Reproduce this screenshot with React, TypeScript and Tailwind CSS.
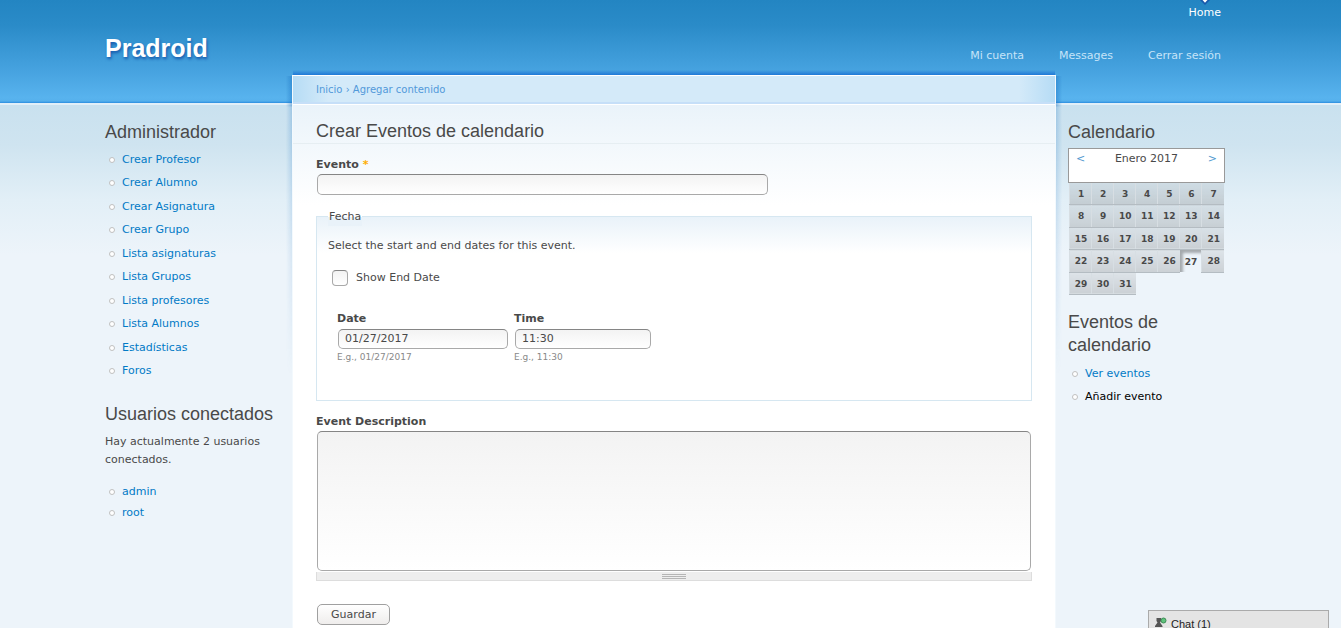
import React from "react";

const adminLinks = [
  "Crear Profesor",
  "Crear Alumno",
  "Crear Asignatura",
  "Crear Grupo",
  "Lista asignaturas",
  "Lista Grupos",
  "Lista profesores",
  "Lista Alumnos",
  "Estadísticas",
  "Foros",
];

const weeks = [
  [1, 2, 3, 4, 5, 6, 7],
  [8, 9, 10, 11, 12, 13, 14],
  [15, 16, 17, 18, 19, 20, 21],
  [22, 23, 24, 25, 26, 27, 28],
  [29, 30, 31],
];

const field =
  "block rounded-[5px] border border-[#a9a9a9] border-t-[#858585] bg-linear-to-b from-[#f3f3f3] to-white px-[6px] pb-[2px] text-[11px] text-[#494949] outline-none";

function Heading({ children }: { children: React.ReactNode }) {
  return (
    <h2 className="font-['Liberation_Sans',sans-serif] text-[18px] leading-[23px] text-[#494949]">
      {children}
    </h2>
  );
}

function Item({ label, dark }: { label: string; dark?: boolean }) {
  return (
    <li className="flex items-center gap-[7px] pl-1">
      <span className="size-[6px] rounded-full border border-[#c0c0c0] bg-white" />
      <a href="#" className={dark ? "text-black" : "text-[#027ac6]"}>
        {label}
      </a>
    </li>
  );
}

function Calendar() {
  return (
    <div className="w-[157px]">
      <div className="flex h-[35px] justify-between border border-[#999] bg-white px-[7px] text-[11px] leading-[19px]">
        <a href="#" aria-label="Mes anterior" className="text-[#5299cf]">&lt;</a>
        <span>Enero 2017</span>
        <a href="#" aria-label="Mes siguiente" className="text-[#5299cf]">&gt;</a>
      </div>
      <table className="ml-px h-[112px] w-[155px] table-fixed border-collapse text-center text-[9px] font-bold leading-none">
        <tbody>
          {weeks.map((week) => (
            <tr key={week[0]}>
              {week.map((day) => (
                <td
                  key={day}
                  className={
                    day === 27
                      ? "bg-[#edf4fa] pt-[2px] pl-px shadow-[inset_3px_3px_3px_#a4a9ad]"
                      : "border-b border-l border-b-[#b4bcc2] border-l-[#d7dee3] bg-linear-to-b from-[#6b6b6b]/12 to-[#6b6b6b]/26 pt-[2px] pl-px"
                  }
                >
                  {day}
                </td>
              ))}
            </tr>
          ))}
        </tbody>
      </table>
    </div>
  );
}

export default function App() {
  return (
    <div className="min-h-screen bg-[#edf4fa] bg-[linear-gradient(to_bottom,#2385c2_0px,#2a8bc8_25px,#46a2df_70px,#58b3ee_98px,#55b0ec_101px,#2b8de0_103px,#e2eff8_103px,#e2eff8_105px,#c9e1ef_105px,#cfe4f0_145px,#e2eff7_200px,#edf4fa_255px)] bg-no-repeat font-['DejaVu_Sans',sans-serif] text-[11px] leading-[18px] text-[#494949]">
      <div className="mx-[105px]">
        <header className="flex h-[75px] justify-between pr-[15px]">
          <h1 className="pt-[33px] font-['Liberation_Sans',sans-serif] text-[25px] leading-[30px] font-bold">
            <a href="#" className="text-white [text-shadow:#1659ac_1px_2px_3px]">
              Pradroid
            </a>
          </h1>
          <div className="flex flex-col items-end">
            <nav className="relative h-[47px] pt-1">
              <svg className="absolute top-0 left-[10px]" width="12" height="5" viewBox="0 0 12 5" aria-hidden="true">
                <path d="M1 0h10L6 5Z" fill="#1659ac" />
                <path d="M3.500 0h5L6 2.800Z" fill="#fff" />
              </svg>
              <a href="#" className="text-white">Home</a>
            </nav>
            <nav className="flex gap-[35px] text-[#c6e4f8]">
              <a href="#">Mi cuenta</a>
              <a href="#">Messages</a>
              <a href="#">Cerrar sesión</a>
            </nav>
          </div>
        </header>

        <div className="flex items-stretch">
          <aside className="w-[187px] shrink-0 pt-[46px]">
            <Heading>Administrador</Heading>
            <ul className="mt-1 grid h-[235px] auto-rows-fr">
              {adminLinks.map((label) => (
                <Item key={label} label={label} />
              ))}
            </ul>
            <div className="pt-5">
              <Heading>Usuarios conectados</Heading>
            </div>
            <p className="mt-[7px] w-[170px]">Hay actualmente 2 usuarios conectados.</p>
            <ul className="mt-3 leading-[21px]">
              <Item label="admin" />
              <Item label="root" />
            </ul>
          </aside>

          <main className="relative min-h-[553px] min-w-0 flex-1 border-x border-t border-x-[#f3f9fd] border-t-white bg-white">
            <span className="pointer-events-none absolute top-0 right-full mr-px h-[300px] w-[6px] bg-linear-to-l from-[#1c74c4]/45 to-transparent [mask-image:linear-gradient(#000_30px,#0008_31px,transparent)]" />
            <span className="pointer-events-none absolute top-0 left-full ml-px h-[300px] w-[6px] bg-linear-to-r from-[#1c74c4]/45 to-transparent [mask-image:linear-gradient(#000_30px,#0008_31px,transparent)]" />
            <span className="pointer-events-none absolute inset-x-0 bottom-full mb-px h-[5px] bg-linear-to-t from-[#1f78d6] to-transparent" />
            <div className="h-[28px] border-b-2 border-b-[#c6dff8] bg-[linear-gradient(to_right,#b6dcf5,#d4eaf9_36px,#d4eaf9_calc(100%-36px),#b6dcf5)] pl-[23px] text-[10px] leading-[28px] text-[#5299d9]">
              <a href="#">Inicio</a> › <a href="#">Agregar contenido</a>
            </div>
            <div className="border-t border-white bg-linear-to-b from-[#eaf3fa] to-white to-[100px] px-[23px] pt-[15px]">
              <div className="-mx-[23px] border-b border-[#e6eef2] px-[23px]">
                <Heading>Crear Eventos de calendario</Heading>
              </div>
              <form onSubmit={(e) => e.preventDefault()}>
                <label htmlFor="evento" className="mt-3 block font-bold">
                  Evento <span className="text-[#ffae00]">*</span>
                </label>
                <input id="evento" className={`${field} ml-px h-[21px] w-[451px]`} />

                <fieldset className="relative mt-[21px] h-[185px] border border-[#d6e7f1] bg-linear-to-b from-[#e9f2f9] to-white to-[36px] px-[11px]">
                  <legend className="absolute -top-[9px] left-[11px] bg-linear-to-b from-white from-50% to-[#e9f2f9] to-50% px-px">
                    Fecha
                  </legend>
                  <p className="pt-5">Select the start and end dates for this event.</p>
                  <label className="mt-[14px] ml-1 flex items-center gap-2">
                    <input
                      type="checkbox"
                      className="size-4 appearance-none rounded-[4px] border border-[#a9a9a9] border-t-[#858585] bg-linear-to-b from-[#f3f3f3] to-white"
                    />
                    Show End Date
                  </label>
                  <div className="mt-[23px] ml-[9px] flex gap-[6px]">
                    <div>
                      <label htmlFor="date" className="block font-bold">Date</label>
                      <input id="date" defaultValue="01/27/2017" className={`${field} mt-px ml-px h-5 w-[170px]`} />
                      <p className="text-[9px] leading-[17px] text-[#898989]">E.g., 01/27/2017</p>
                    </div>
                    <div>
                      <label htmlFor="time" className="block font-bold">Time</label>
                      <input id="time" defaultValue="11:30" className={`${field} mt-px ml-px h-5 w-[136px]`} />
                      <p className="text-[9px] leading-[17px] text-[#898989]">E.g., 11:30</p>
                    </div>
                  </div>
                </fieldset>

                <label htmlFor="description" className="mt-3 block font-bold">
                  Event Description
                </label>
                <div className="px-px">
                  <textarea id="description" className={`${field} h-[140px] w-full resize-none`} />
                </div>
                <div className="mt-px flex h-[9px] flex-col items-center justify-center gap-px border border-t-0 border-[#ddd] bg-[#eee]">
                  <span className="h-px w-6 bg-[#b5b5b5]" />
                  <span className="h-px w-6 bg-[#b5b5b5]" />
                  <span className="h-px w-6 bg-[#b5b5b5]" />
                </div>
                <button
                  type="submit"
                  className="mt-[23px] ml-px block h-[21px] w-[73px] rounded-[5px] border border-[#a0a0a0] bg-linear-to-b from-white to-[#efedec] text-[11px] leading-none"
                >
                  Guardar
                </button>
              </form>
            </div>
          </main>

          <aside className="w-[180px] shrink-0 pt-[46px] pl-3">
            <Heading>Calendario</Heading>
            <div className="mt-1">
              <Calendar />
            </div>
            <div className="w-[140px] pt-4">
              <Heading>Eventos de calendario</Heading>
            </div>
            <ul className="mt-[5px] leading-[23px]">
              <Item label="Ver eventos" />
              <Item label="Añadir evento" dark />
            </ul>
          </aside>
        </div>
      </div>

      <div className="fixed right-3 bottom-0 flex h-[18px] w-[181px] gap-1 overflow-hidden border border-b-0 border-[#aaa] bg-[#e4e4e4] pt-[6px] pl-[6px] font-['Liberation_Sans',sans-serif] leading-[14px] text-[#222]">
        <svg className="shrink-0" width="12" height="12" viewBox="0 0 12 12" aria-hidden="true">
          <path d="M1.500 1h4.500v3L5 5.500 7.500 9v1H0V9l2.500-3.500-1-1.500Z" fill="#555" />
          <circle cx="8.500" cy="3.500" r="2.500" fill="#5fc27c" stroke="#3d8d55" />
        </svg>
        Chat (1)
      </div>
    </div>
  );
}
